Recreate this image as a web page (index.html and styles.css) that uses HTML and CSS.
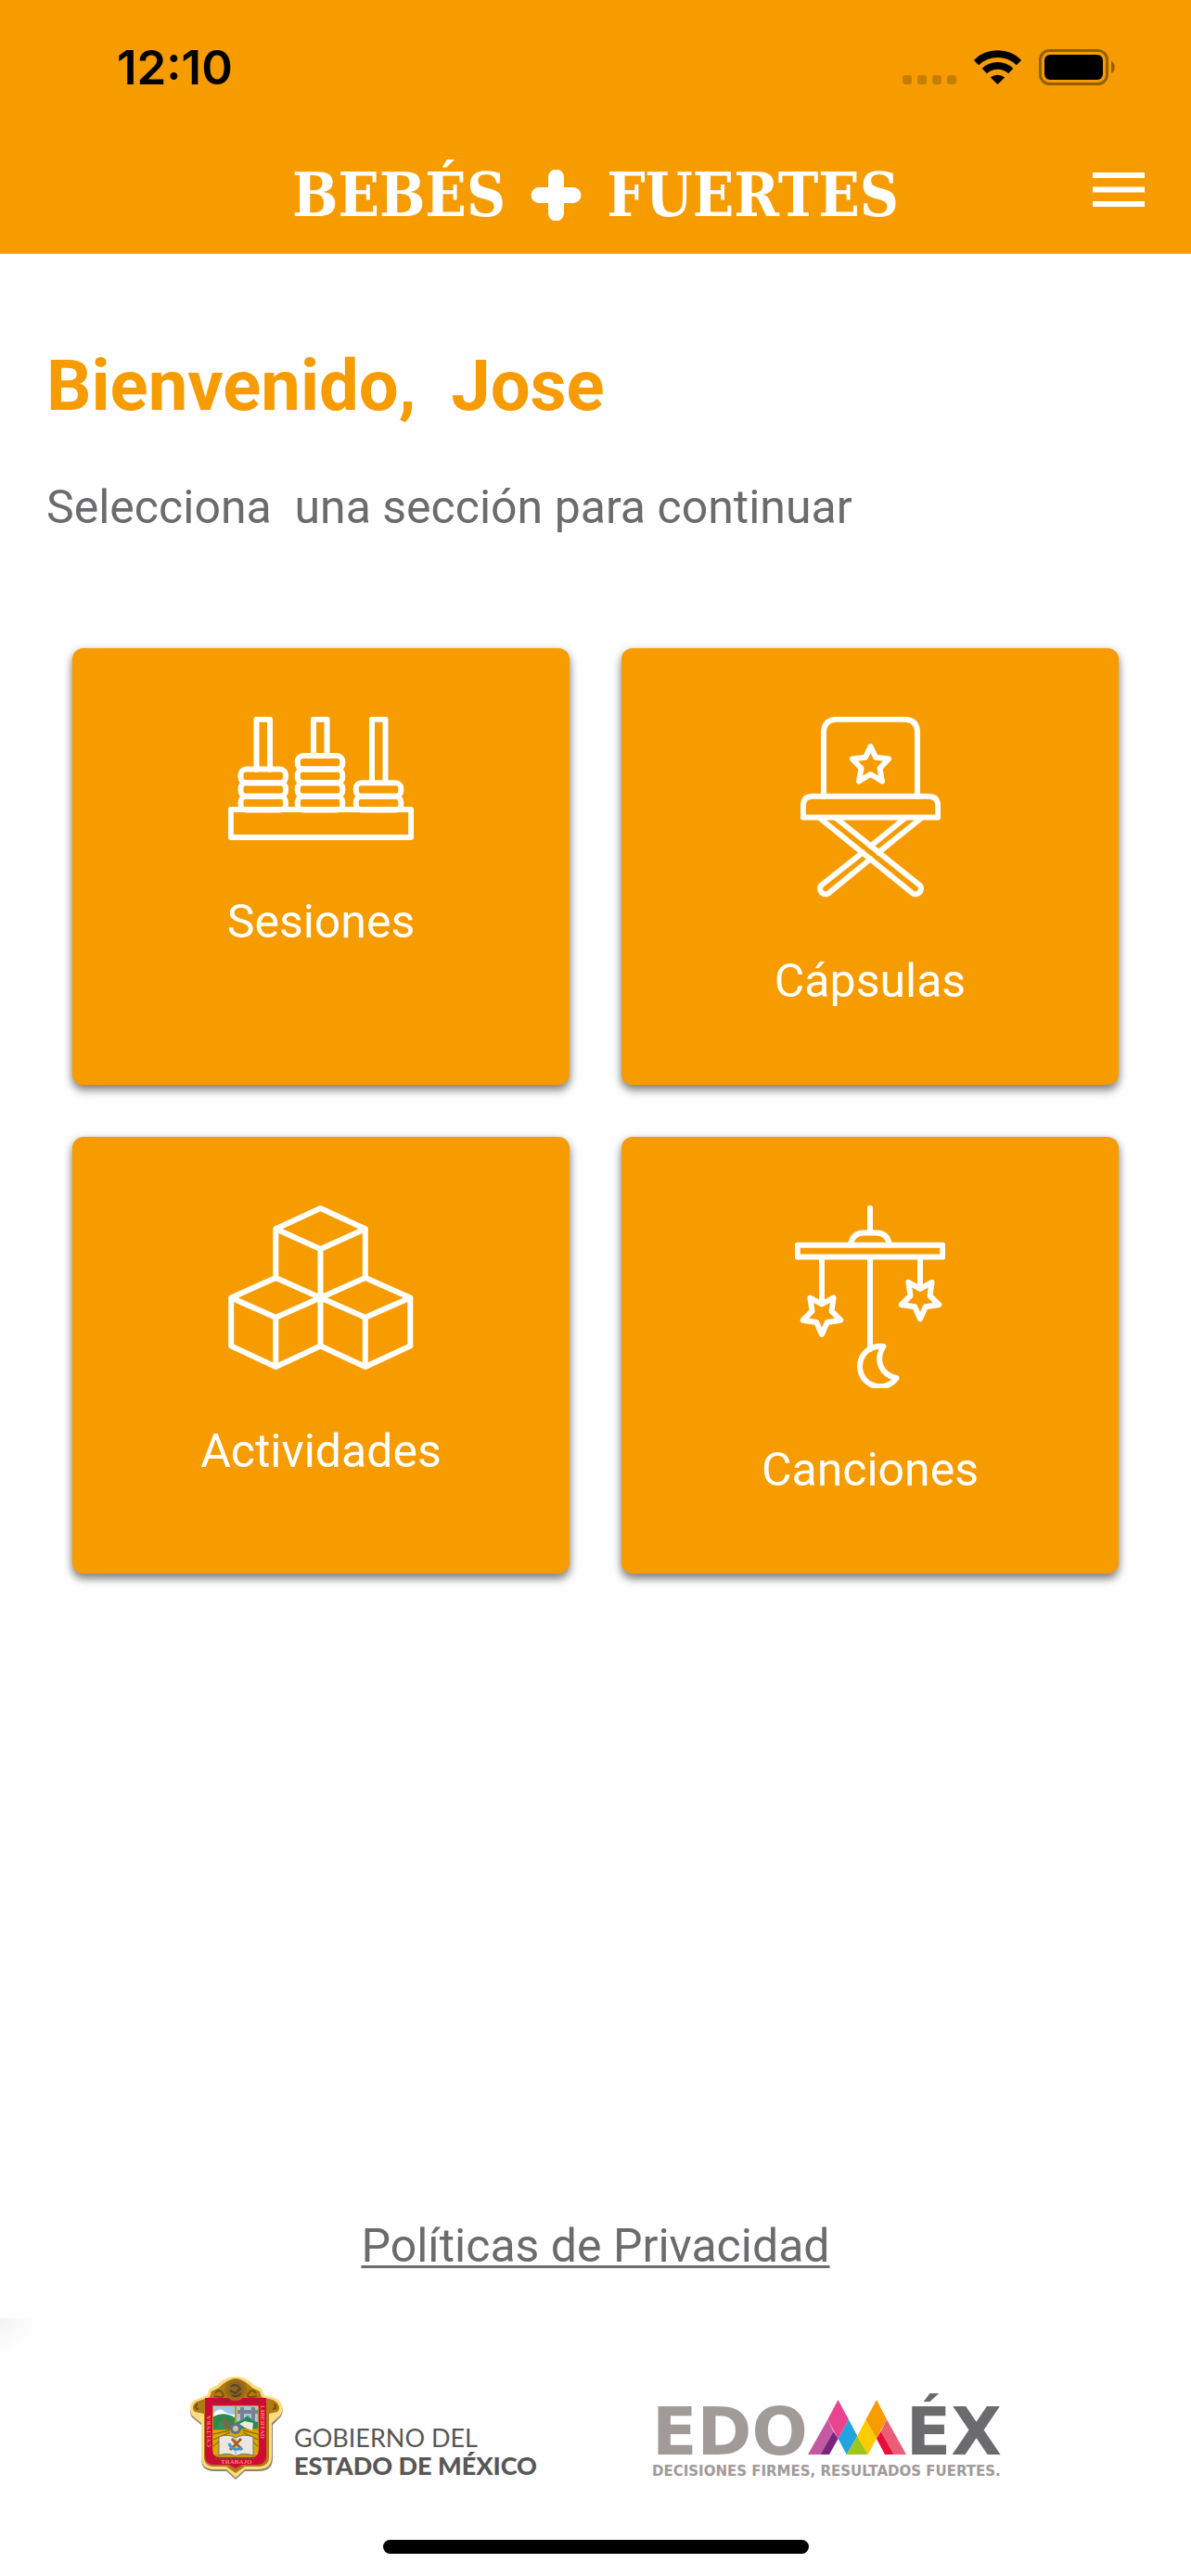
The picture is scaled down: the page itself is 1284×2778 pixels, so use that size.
FILE: index.html
```html
<!DOCTYPE html>
<html lang="es">
<head>
<meta charset="utf-8">
<meta name="viewport" content="width=device-width, initial-scale=1">
<title>Bebés + Fuertes</title>
<link rel="stylesheet" href="styles.css">
</head>
<body>
<header class="header">
  <div class="status">
    <time class="status-time">12:10</time>
    <div class="status-icons">
      <svg width="58" height="37" viewBox="0 0 58 37" fill="#c57e00" aria-hidden="true">
        <rect x="0" y="27" width="10" height="10" rx="3"/><rect x="16" y="27" width="10" height="10" rx="3"/><rect x="32" y="27" width="10" height="10" rx="3"/><rect x="48" y="27" width="10" height="10" rx="3"/>
      </svg>
      <svg class="wifi" width="51" height="37" viewBox="0 0 51 37" aria-hidden="true">
        <path d="M2.5 13.5A33 33 0 0 1 48.500 13.500M11.300 22.600A20.500 20.500 0 0 1 39.700 22.600" fill="none" stroke="#000" stroke-width="7.600"/>
        <path d="M17.800 29.600A11.500 11.500 0 0 1 33.200 29.600L25.500 37Z"/>
      </svg>
      <svg class="battery" width="83" height="39" viewBox="0 0 83 39" aria-hidden="true">
        <rect x="1.500" y="1.500" width="72" height="36" rx="10" fill="none" stroke="#945f00" stroke-width="3"/>
        <rect x="6" y="6" width="63" height="27" rx="6"/>
        <path d="M78 13C83 15 83 24 78 26Z" fill="#945f00"/>
      </svg>
    </div>
  </div>
  <div class="toolbar">
    <h1 class="brand">
      <span>BEBÉS</span>
      <svg width="55" height="55" viewBox="0 0 55 55" role="img" aria-label="+"><path d="M27.500 8V47M9 27.500H46" stroke="#fff" stroke-width="17" stroke-linecap="round"/></svg>
      <span>FUERTES</span>
    </h1>
    <button class="menu" type="button" aria-label="Menú">
      <svg width="56" height="37" viewBox="0 0 56 37" fill="#fff" aria-hidden="true"><path d="M0 0H56V6H0ZM0 15.500H56V21.500H0ZM0 31H56V37H0Z"/></svg>
    </button>
  </div>
</header>

<main class="main">
  <h2 class="greeting">Bienvenido,&nbsp; Jose</h2>
  <p class="lead">Selecciona&nbsp; una sección para continuar</p>
  <nav class="cards" aria-label="Secciones">
    <a class="card" href="#sesiones">
      <svg class="icon" width="200" height="133" viewBox="0 0 200 133" aria-hidden="true">
        <rect x="2.800" y="100" width="194.400" height="30"/>
        <path d="M30.500 57V2.800H45V57M92 42V2.800H106.500V42M155 71V2.800H169.500V71"/>
        <rect x="13.500" y="56.600" width="48.500" height="14.600" rx="6"/><rect x="13.500" y="71.200" width="48.500" height="14.600" rx="6"/><rect x="13.500" y="85.800" width="48.500" height="14.600" rx="6"/>
        <rect x="74.800" y="42" width="48.500" height="14.600" rx="6"/><rect x="74.800" y="56.600" width="48.500" height="14.600" rx="6"/><rect x="74.800" y="71.200" width="48.500" height="14.600" rx="6"/><rect x="74.800" y="85.800" width="48.500" height="14.600" rx="6"/>
        <rect x="137.800" y="71.200" width="48.500" height="14.600" rx="6"/><rect x="137.800" y="85.800" width="48.500" height="14.600" rx="6"/>
      </svg>
      <span>Sesiones</span>
    </a>
    <a class="card" href="#capsulas">
      <svg class="icon" width="151" height="197" viewBox="0 0 151 197" aria-hidden="true">
        <path d="M25 85.800V17Q25 2.800 39.500 2.800H111.500Q126 2.800 126 17V85.800"/>
        <path d="M2.800 108.500V96Q2.800 85.800 13 85.800H138Q148.200 85.800 148.200 96V108.500Z"/>
        <path d="M75.500 32L81 43.700L95 45.500L85.500 55.500L88 69.500L75.500 62L63 69.500L65.500 55.500L56 45.500L70 43.700Z"/>
        <path d="M20.500 109L121 190.500A6 6 0 0 0 129 182L38 109"/>
        <path d="M113 109L75.500 139.500M130.500 109L84 146.400M67 146.400L22 182A6 6 0 0 0 30 190.500L75.500 153.200"/>
      </svg>
      <span>Cápsulas</span>
    </a>
    <a class="card" href="#actividades">
      <svg class="icon" width="200" height="177" viewBox="0 0 200 177" aria-hidden="true">
        <path d="M99.500 3L51.300 25.300L99.500 47L147.800 25.300ZM51.300 25.300V78L99.500 99.500L147.800 78V25.300M99.500 47V151.500"/>
        <path d="M51.300 78L3.200 99.500V151.500L51.300 174L99.500 151.500L147.800 174L196.300 151.500V99.500L147.800 78M3.200 99.500L51.300 120.800L99.500 99.500L147.800 120.800L196.300 99.500M51.300 120.800V174M147.800 120.800V174"/>
      </svg>
      <span>Actividades</span>
    </a>
    <a class="card" href="#canciones">
      <svg class="icon" width="162" height="197" viewBox="0 0 162 197" aria-hidden="true">
        <path d="M81 2.800V29.500M60 42.800Q62 29.500 74 29.500H88Q100 29.500 102 42.800"/>
        <rect x="2.800" y="42.800" width="156.500" height="12.800"/>
        <path d="M29 56V106M81 56V155M135 56V89"/>
        <path d="M29 106.500L41.600 99.500L39.500 114L49.300 123.700L34.800 126L29 139L23.200 126L8.700 123.700L18.500 114L16.400 99.500Z"/>
        <path d="M135 89.800L147.600 82.800L145.500 97.300L155.300 107L140.800 109.300L135 122.300L129.200 109.300L114.700 107L124.500 97.300L122.400 82.800Z"/>
        <path d="M95.500 152C86 167 93 183 109.600 186A21.800 21.800 0 1 1 95.500 152Z"/>
      </svg>
      <span>Canciones</span>
    </a>
  </nav>
  <a class="privacy" href="#privacidad">Políticas de Privacidad</a>
</main>

<footer class="footer">
  <div class="logos">
    <div class="gobierno">
      <svg width="101" height="111" viewBox="0 0 101 111" aria-hidden="true">
        <path d="M50 2C60 2 67 8 72 14L80 22L92 25C101 28 103 38 98 44L90 52V88C90 97 85 102 75 102H60L50 111L40 102H27C17 102 13 97 13 89V52L3 44C-1 37 1 28 9 26L20 22L28 14C33 8 40 2 50 2Z" fill="#8f8470"/>
        <path d="M50 0C59 0 65 4 70 9L78 13L81 20L92 23C101 26 103 36 98 42L89 50V86C89 95 84 100 74 100H60L50 109L40 100H27C17 100 13 95 13 87V50L3 42C-1 35 1 26 9 24L19 20L22 13L30 9C35 4 41 0 50 0Z" fill="#fbdc80"/>
        <path d="M50 3C59 3 64 8 68 12L76 16L78 22L90 25C97 28 99 35 95 38L86 40V87Q86 96 76 97H60L50 104L40 97H25Q16 96 16 87V40L6 38C2 35 4 28 11 26L22 22L24 16L32 12C36 8 41 3 50 3Z" fill="#b17a12"/>
        <path d="M17 23H83V84Q83 95 73 95H57L50 99L43 95H27Q17 95 17 84Z" fill="#cf0a35"/>
        <path d="M25 31H75V78Q75 87 67 87H33Q25 87 25 78Z" fill="#c99500"/>
        <path d="M26 32H49V56H26Z" fill="#9cc8ef"/><path d="M51 32H74V56H51Z" fill="#a9c2ea"/>
        <path d="M26 40Q32 33 37 37T49 41V45H26Z" fill="#fff"/>
        <path d="M26 43Q37 37 49 44V57H26Z" fill="#2f8a51"/>
        <path d="M30 56L37 44L43 50L49 57Z" fill="#776a48"/>
        <path d="M29 57L34 47L39 57Z" fill="#26985c"/>
        <path d="M57 33V49M69 33V49M52 38H74" stroke="#78828f" stroke-width="4"/>
        <path d="M51 49L57 47L63 42L69 48L74 49V56H51Z" fill="#248b57"/>
        <path d="M54 51L60 48L69 50L68 58L60 55Z" fill="#f2eadc"/>
        <path d="M26 58H74V84H26Z" fill="#dba800"/>
        <path d="M26 62L44 58M26 68L44 60M26 75L38 65M74 62L58 58M74 68L58 60M74 75L62 65" stroke="#705b00" stroke-width="1"/>
        <path d="M32 65Q42 61 50 66Q58 61 69 65V85Q58 81 50 86Q42 81 32 85Z" fill="#e9e7df" stroke="#77736a"/>
        <path d="M50 66V85" stroke="#a4a097" stroke-width="1"/>
        <circle cx="50" cy="56" r="6" fill="#58758e"/><circle cx="50" cy="56" r="3" fill="#d8c19f"/>
        <path d="M46 67L57 79M56 67L44 79" stroke="#a85d22" stroke-width="3"/><path d="M43 72Q46 81 57 77" fill="none" stroke="#3c9bd3" stroke-width="3"/>
        <path d="M28 88.500H72" stroke="#4d6b1b" stroke-width="2" stroke-dasharray="2 2"/>
        <path d="M28 18Q32 12 36 18T27 21M72 18Q68 12 64 18T73 21M9 29Q4 34 10 35M91 29Q96 34 90 35" fill="none" stroke="#77500a" stroke-width="2"/>
        <circle cx="50" cy="14" r="12" fill="#a26c12"/><circle cx="50" cy="14" r="9" fill="#8b6427"/>
        <path d="M45 11Q50 6 55 13L50 18L44 15M46 20Q51 23 56 18" fill="none" stroke="#5c4320" stroke-width="2"/>
        <path d="M26 26.500H44M56 26.500H75" stroke="#8f2130" stroke-width="2" stroke-dasharray="2 1"/>
        <g class="crest-text"><text x="-76" y="23" transform="rotate(-90)">CVLTVRA</text><text x="31" y="-77" transform="rotate(90)">LIBERTAD</text><text x="34" y="94">TRABAJO</text></g>
      </svg>
      <p class="gobierno-text">GOBIERNO DEL<br><strong>ESTADO DE MÉXICO</strong></p>
    </div>
    <div class="edomex">
      <p class="edomex-name">
        <span>EDO</span>
        <svg width="106" height="59" viewBox="0 0 106 59" role="img" aria-label="M">
          <path d="M32.500 0L21.300 21.300L32.600 42L44 21.300Z" fill="#ea4490"/>
          <path d="M21.300 21.300L0 59H13.500L27.500 34Z" fill="#c35aa1"/>
          <path d="M27.500 34L32.600 42L23 59H13.500Z" fill="#7b247f"/>
          <path d="M44 21.300L32.600 42L41.700 59L53.300 39Z" fill="#22a3df"/>
          <path d="M53.300 39L41.700 59H64.700Z" fill="#9dc51e"/>
          <path d="M62.500 21.300L53.300 39L64.700 59L74 42Z" fill="#fdcc00"/>
          <path d="M74 0L62.500 21.300L74 42L85 21.300Z" fill="#f69c00"/>
          <path d="M85 21.300L106 59H92.700L78.700 34Z" fill="#ed5c77"/>
          <path d="M78.700 34L92.700 59H83L74 42Z" fill="#e70d3c"/>
        </svg>
        <span class="edomex-dark">ÉX</span>
      </p>
      <p class="edomex-tagline">DECISIONES FIRMES, RESULTADOS FUERTES.</p>
    </div>
  </div>
  <div class="home-indicator"></div>
</footer>
</body>
</html>
```
FILE: styles.css
```css
:root {
  --orange: #f69c00;
  --gray: #6b6a6c;
}

* {
  box-sizing: border-box;
}

body {
  display: flex;
  flex-direction: column;
  min-height: 100vh;
  margin: 0;
  background: #fefefe;
  color: var(--gray);
  font: 400 50px/56px Roboto, sans-serif;
}

h1, h2, p {
  margin: 0;
}

svg {
  display: block;
  flex: none;
}

.header {
  background: var(--orange);
  border-bottom: 1px solid #bfbfbf;
}

.status {
  display: flex;
  justify-content: space-between;
  align-items: center;
  height: 145px;
  padding: 0 81px 0 126px;
}

.status-time {
  color: #000;
  font: 600 51px/60px Inter, sans-serif;
}

.status-icons {
  display: flex;
  align-items: center;
  gap: 19px;
}

.toolbar {
  display: grid;
  grid-template-columns: 1fr auto 1fr;
  align-items: center;
  height: 128px;
  padding: 0 50px 10px;
}

.brand {
  grid-column: 2;
  display: flex;
  align-items: center;
  gap: 27px;
  padding-top: 12px;
  color: #fff;
  font: 700 65px/72px "DejaVu Serif Condensed", "DejaVu Serif", serif;
}

.menu {
  justify-self: end;
  padding: 0;
  border: 0;
  background: none;
}

.main {
  flex: 1;
  display: flex;
  flex-direction: column;
  padding: 100px 50px 50px;
}

.greeting {
  color: var(--orange);
  font-size: 76px;
  font-weight: 700;
  line-height: 84px;
}

.lead {
  margin-top: 61px;
}

.cards {
  display: grid;
  grid-template-columns: 1fr 1fr;
  grid-auto-rows: 1fr;
  gap: 56px;
  padding: 0 28px;
  margin-top: 124px;
}

.card {
  display: flex;
  flex-direction: column;
  align-items: center;
  gap: 60px;
  padding: 74px 24px 84px;
  border-radius: 12px;
  background: var(--orange);
  box-shadow: 0 6px 10px rgba(0, 0, 0, 0.4), 0 2px 10px rgba(0, 0, 0, 0.2);
  color: #fff;
  text-decoration: none;
}

.icon {
  fill: none;
  stroke: #fff;
  stroke-width: 6;
  stroke-linejoin: round;
  stroke-linecap: round;
}

.privacy {
  align-self: center;
  margin-top: auto;
  color: inherit;
  text-decoration-thickness: 3px;
  text-underline-offset: 4px;
}

.footer {
  display: flex;
  flex-direction: column;
  align-items: center;
  gap: 65px;
  padding: 63px 50px 24px;
  background: radial-gradient(circle at 0 0, #f3f3f3, #fefefe 38px);
}

.logos {
  display: flex;
  justify-content: center;
  align-items: flex-end;
  gap: 124px;
}

.gobierno {
  display: flex;
  align-items: flex-end;
  gap: 12px;
}

.gobierno-text {
  color: #575756;
  font: 400 27px/30px Lato, sans-serif;
}

.gobierno-text strong {
  font-weight: 900;
}

.crest-text {
  fill: #f08a7a;
  font: 700 7px "Liberation Serif", serif;
}

.edomex {
  color: #a09a99;
}

.edomex-name {
  display: flex;
  align-items: baseline;
  font: 700 71px/59px "DejaVu Sans", sans-serif;
}

.edomex-dark {
  color: var(--gray);
}

.edomex-tagline {
  margin-top: 4px;
  font: 700 15px/18px "DejaVu Sans", sans-serif;
}

.home-indicator {
  width: 459px;
  height: 15px;
  border-radius: 8px;
  background: #000;
}
```
